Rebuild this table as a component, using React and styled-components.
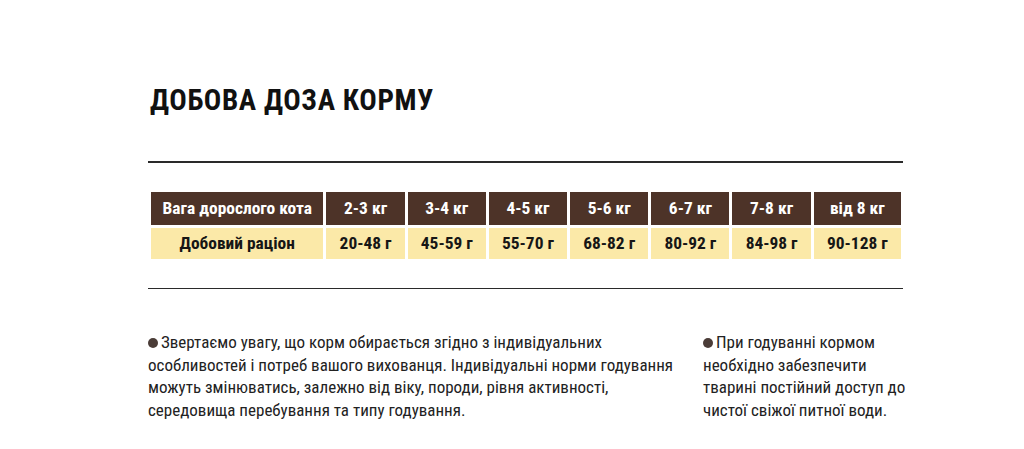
import styled, {createGlobalStyle} from "styled-components";

const GlobalStyle = createGlobalStyle`
  html, body {
    margin: 0;
    padding: 0;
    background: #ffffff;
  }

  body {
    font-family: Roboto, "DejaVu Sans Condensed", sans-serif;
    font-stretch: 80%;
    color: #1b1b1b;
  }
`;

const weights = ['2-3 кг', '3-4 кг', '4-5 кг', '5-6 кг', '6-7 кг', '7-8 кг', 'від 8 кг'];
const rations = ['20-48 г', '45-59 г', '55-70 г', '68-82 г', '80-92 г', '84-98 г', '90-128 г'];

const App = () => {
    return (
        <>
            <GlobalStyle/>
            <Wrapper>
                <Title>ДОБОВА ДОЗА КОРМУ</Title>
                <Rule/>
                <Table>
                    <colgroup>
                        <col style={{width: 172}}/>
                        {weights.map((w, i) => <col key={w} style={{width: i === weights.length - 1 ? 87 : 78}}/>)}
                    </colgroup>
                    <tbody>
                    <tr>
                        <Cell $head>Вага дорослого кота</Cell>
                        {weights.map((w) => <Cell key={w} $head>{w}</Cell>)}
                    </tr>
                    <tr>
                        <Cell>Добовий раціон</Cell>
                        {rations.map((r) => <Cell key={r}>{r}</Cell>)}
                    </tr>
                    </tbody>
                </Table>
                <Rule/>
                <Notes>
                    <Note>
                        <Dot/>Звертаємо увагу, що корм обирається згідно з індивідуальних особливостей і потреб
                        вашого вихованця. Індивідуальні норми годування можуть змінюватись, залежно від віку,
                        породи, рівня активності, середовища перебування та типу годування.
                    </Note>
                    <Note>
                        <Dot/>При годуванні кормом необхідно забезпечити тварині постійний доступ до чистої
                        свіжої питної води.
                    </Note>
                </Notes>
            </Wrapper>
        </>
    );
};

export default App;

const Wrapper = styled.div`
  width: 755px;
  padding: 78px 0 0 148px;
`;

const Title = styled.h1`
  margin: 0 0 0 2px;
  font-size: 29px;
  font-weight: 700;
  line-height: 44px;
  letter-spacing: 0.6px;
  color: #111111;
`;

const Rule = styled.hr`
  margin: 39px 0 0;
  border: none;
  height: 1.5px;
  background-color: #2a2a2a;

  & + table {
    margin-top: 26px;
  }

  table + & {
    margin-top: 26px;
  }
`;

const Table = styled.table`
  margin-left: 0;
  width: 756px;
  border-collapse: separate;
  border-spacing: 3px;
  table-layout: fixed;
`;

const Cell = styled.td`
  height: ${(p) => (p.$head ? '33px' : '31px')};
  padding: 0;
  text-align: center;
  font-size: 17.4px;
  font-weight: 700;
  color: ${(p) => (p.$head ? '#ffffff' : '#161616')};
  background-color: ${(p) => (p.$head ? '#4d3328' : '#fbe9a8')};
`;

const Notes = styled.div`
  display: grid;
  grid-template-columns: 538px 215px;
  column-gap: 17px;
  margin-top: 42px;
`;

const Note = styled.p`
  margin: 0;
  font-size: 17px;
  line-height: 22.7px;
  color: #222222;
`;

const Dot = styled.span`
  display: inline-block;
  width: 10px;
  height: 10px;
  margin-right: 3px;
  border-radius: 50%;
  background-color: #4a3c37;
  vertical-align: 0;
`;
